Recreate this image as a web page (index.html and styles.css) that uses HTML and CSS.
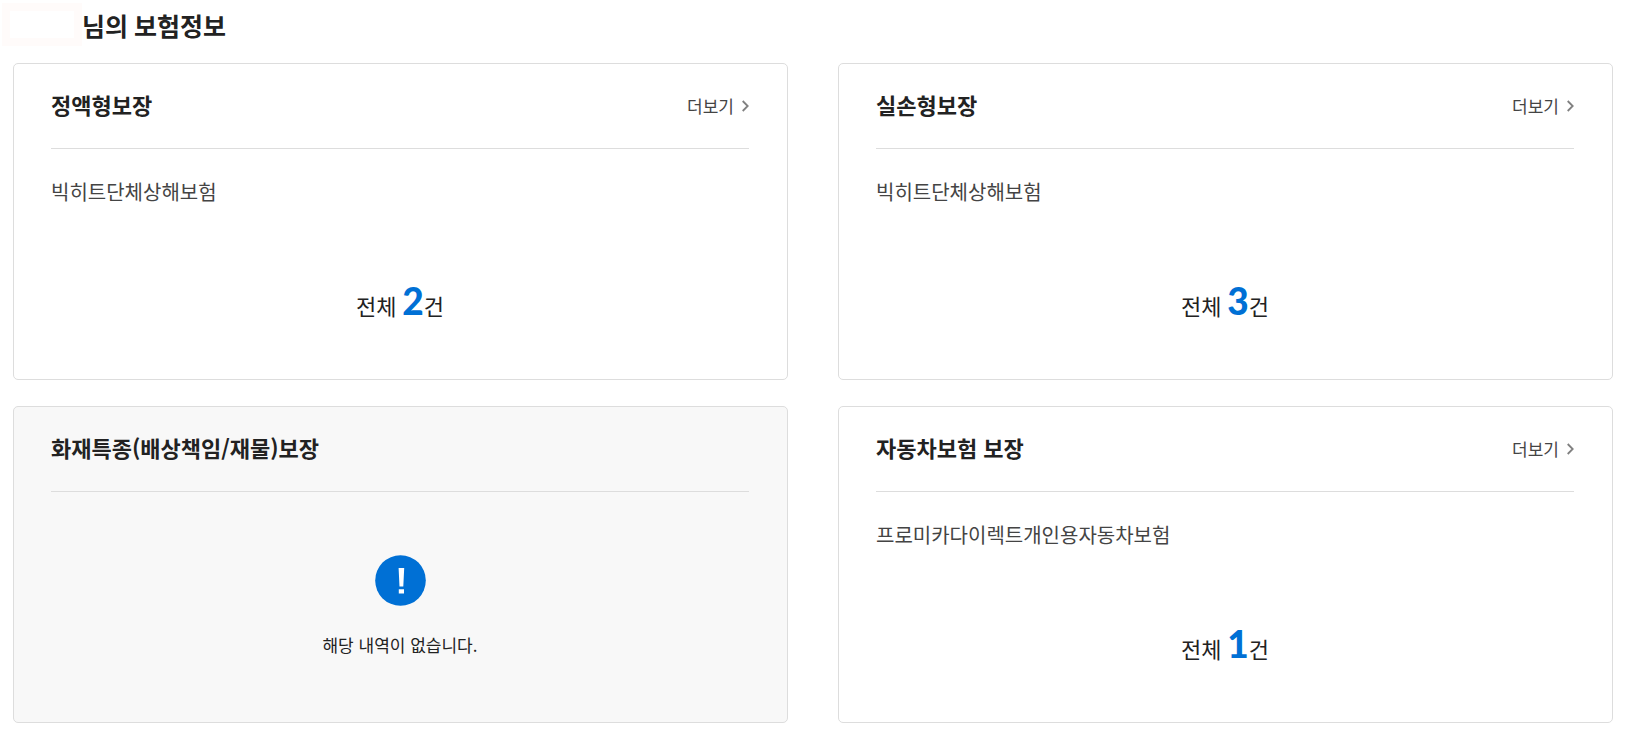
FILE: index.html
```
<!DOCTYPE html>
<html lang="ko">
<head>
    <meta charset="UTF-8">
    <meta name="viewport" content="width=device-width, initial-scale=1.0">
    <title>보험정보</title>
    <link rel="stylesheet" href="styles.css">
</head>
<body>
    <header class="page-header">
        <span class="user-name"></span>
        <h1>님의 보험정보</h1>
    </header>

    <main class="card-list">
        <section class="card">
            <div class="card-head">
                <h2>정액형보장</h2>
                <a href="#" class="more">더보기
                    <svg width="7" height="12" viewBox="0 0 7 12"><path d="M.7 1l5 5-5 5"/></svg>
                </a>
            </div>
            <p class="product">빅히트단체상해보험</p>
            <p class="total">전체 <strong>2</strong>건</p>
        </section>

        <section class="card">
            <div class="card-head">
                <h2>실손형보장</h2>
                <a href="#" class="more">더보기
                    <svg width="7" height="12" viewBox="0 0 7 12"><path d="M.7 1l5 5-5 5"/></svg>
                </a>
            </div>
            <p class="product">빅히트단체상해보험</p>
            <p class="total">전체 <strong>3</strong>건</p>
        </section>

        <section class="card card-empty">
            <div class="card-head">
                <h2>화재특종(배상책임/재물)보장</h2>
            </div>
            <div class="no-data">
                <svg width="51" height="51" viewBox="0 0 51 51">
                    <circle cx="25.5" cy="25.5" r="25.3" fill="#0070d5"/>
                    <path d="M23.6 13h5.600l-.9 18.500h-3.800zM23.800 34.200h5.200v4.200h-5.200z" fill="#fff"/>
                </svg>
                <p>해당 내역이 없습니다.</p>
            </div>
        </section>

        <section class="card">
            <div class="card-head">
                <h2>자동차보험 보장</h2>
                <a href="#" class="more">더보기
                    <svg width="7" height="12" viewBox="0 0 7 12"><path d="M.7 1l5 5-5 5"/></svg>
                </a>
            </div>
            <p class="product">프로미카다이렉트개인용자동차보험</p>
            <p class="total">전체 <strong>1</strong>건</p>
        </section>
    </main>
</body>
</html>
```
FILE: styles.css
```
* {
    box-sizing: border-box;
}
body {
    margin: 0;
    font-family: "Noto Sans CJK KR", sans-serif;
    color: #222;
    background: #fff;
}
h1, h2, p {
    margin: 0;
}
.page-header {
    display: flex;
    align-items: flex-start;
    height: 63px;
    padding: 3px 2px 0;
}
.user-name {
    width: 80px;
    height: 43px;
    border: 8px solid #fffbfa;
}
h1 {
    font-family: Lato, "Noto Sans CJK KR", sans-serif;
    font-size: 25px;
    line-height: 46px;
}
.card-list {
    display: grid;
    grid-template-columns: 1fr 1fr;
    gap: 26px 50px;
    padding: 0 19px 10px 13px;
}
.card {
    min-height: 317px;
    padding: 0 38px 0 37px;
    border: 1px solid #ddd;
    border-radius: 5px;
}
.card-empty {
    background: #f8f8f8;
}
.card-head {
    display: flex;
    justify-content: space-between;
    align-items: flex-start;
    height: 85px;
    padding-top: 24px;
    border-bottom: 1px solid #ddd;
}
h2 {
    font-size: 22px;
    line-height: 32px;
}
.more {
    display: flex;
    align-items: center;
    gap: 8px;
    font-size: 17px;
    line-height: 36px;
    color: #444;
    text-decoration: none;
}
.more svg {
    fill: none;
    stroke: #808080;
    stroke-width: 1.8;
}
.product {
    margin-top: 28px;
    font-size: 20px;
    line-height: 30px;
    color: #444;
}
.total {
    margin-top: 64px;
    font-family: Lato, "Noto Sans CJK KR", sans-serif;
    font-size: 22px;
    line-height: 60px;
    text-align: center;
}
.total strong {
    font-size: 37px;
    font-weight: 900;
    color: #0070d5;
}
.no-data {
    padding-top: 63px;
    text-align: center;
}
.no-data svg {
    display: block;
    margin: 0 auto 26px;
}
.no-data p {
    font-size: 17px;
    line-height: 26px;
}
```
